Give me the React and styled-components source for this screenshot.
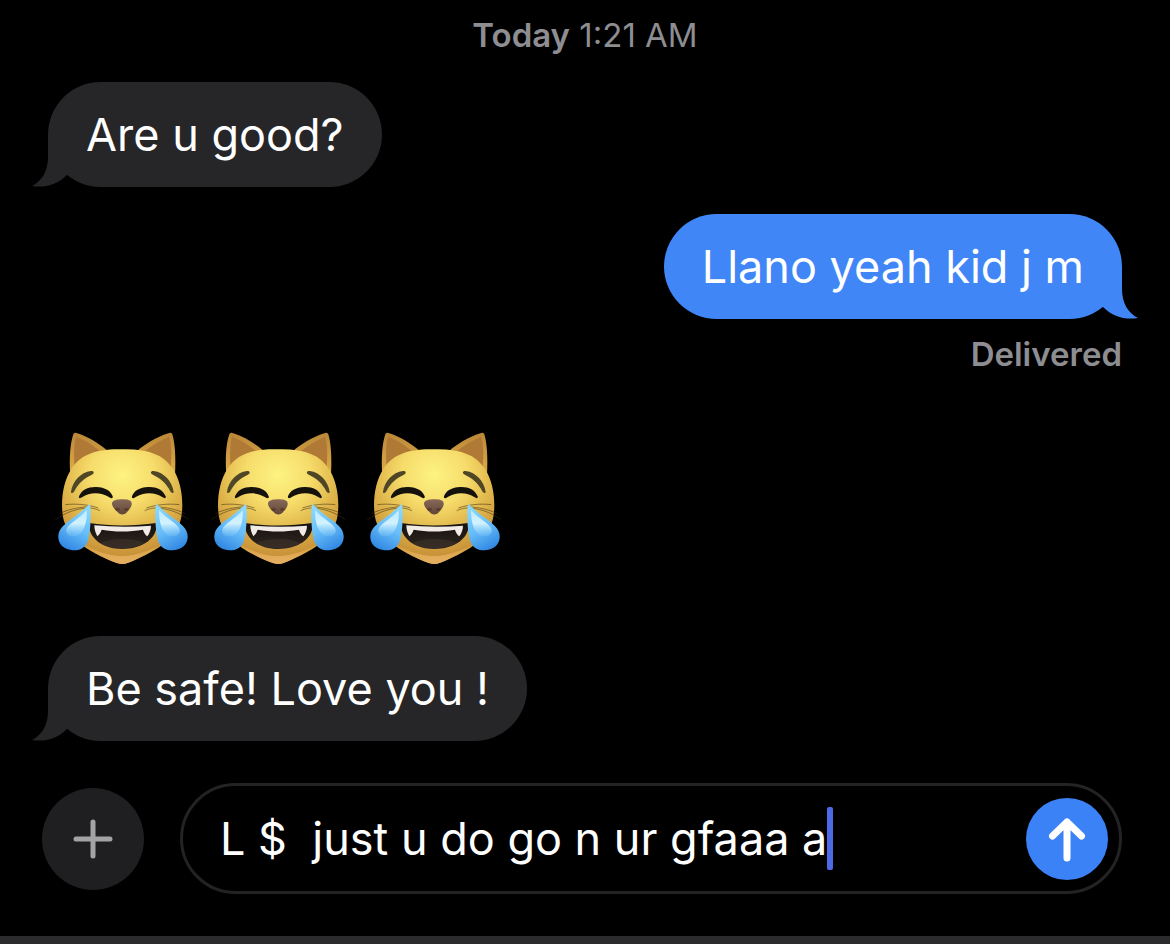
import { useState } from "react";
import styled, { createGlobalStyle } from "styled-components";

const GlobalStyle = createGlobalStyle`
  * {
    box-sizing: border-box;
  }
  body {
    margin: 0;
    background-color: #000;
    color: #fff;
    font-family: Inter, Roboto, sans-serif;
  }
`;
const Screen = styled.div`
  min-height: 100vh;
  display: flex;
  flex-direction: column;
`;
const Thread = styled.main`
  flex: 1;
  display: flex;
  flex-direction: column;
  padding: 15px 48px 42px;
`;
const Timestamp = styled.time`
  text-align: center;
  color: #8d8d92;
  font-size: 33px;
  line-height: 40px;
  margin-bottom: 27px;
  strong {
    font-weight: 600;
  }
`;
const Bubble = styled.div`
  position: relative;
  align-self: ${(props) => (props.$mine ? "flex-end" : "flex-start")};
  background-color: ${(props) => (props.$mine ? "#4086f7" : "#262628")};
  border-radius: 53px;
  padding: 24px 38px;
  font-size: 45px;
  line-height: 57px;
`;
const TailSvg = styled.svg`
  position: absolute;
  bottom: 0;
  ${(props) => (props.$mine ? "right: -16px;" : "left: -16px;")}
  transform: ${(props) => (props.$mine ? "scaleX(-1)" : "none")};
  fill: ${(props) => (props.$mine ? "#4086f7" : "#262628")};
`;
const Sent = styled.div`
  display: flex;
  flex-direction: column;
  margin-top: 27px;
`;
const Status = styled.div`
  align-self: flex-end;
  margin-top: 15px;
  color: #8d8d92;
  font-size: 33px;
  font-weight: 600;
  line-height: 40px;
`;
const EmojiRow = styled.div`
  display: flex;
  margin: 46px -8px 61px;
`;
const Composer = styled.form`
  display: flex;
  align-items: center;
  gap: 36px;
  padding: 0 48px 42px 42px;
`;
const PlusButton = styled.button`
  flex: none;
  display: flex;
  align-items: center;
  justify-content: center;
  width: 102px;
  height: 102px;
  padding: 0;
  border: 0;
  border-radius: 50%;
  background-color: #1f1f21;
`;
const Field = styled.div`
  flex: 1;
  min-width: 0;
  display: flex;
  align-items: center;
  height: 111px;
  padding: 0 11px 0 37px;
  border: 3px solid #232325;
  border-radius: 56px;
`;
const MessageInput = styled.input`
  field-sizing: content;
  min-width: 0;
  padding: 0;
  border: 0;
  outline: none;
  background: transparent;
  color: #fff;
  caret-color: transparent;
  font-family: inherit;
  font-size: 45px;
  line-height: 57px;
`;
const Caret = styled.span`
  flex: none;
  width: 6px;
  height: 63px;
  border-radius: 2px;
  background-color: #4e69e6;
`;
const SendButton = styled.button`
  flex: none;
  display: flex;
  align-items: center;
  justify-content: center;
  width: 82px;
  height: 82px;
  margin-left: auto;
  padding: 0;
  border: 0;
  border-radius: 50%;
  background-color: #3b82f6;
`;
const KeyboardEdge = styled.div`
  height: 8px;
  background-color: #2b2b2d;
`;

function Message({ mine, children }) {
  return (
    <Bubble $mine={mine}>
      <TailSvg $mine={mine} width="36" height="53" viewBox="0 0 36 53" aria-hidden="true">
        <path d="M16 0V23C16 37 10 47 0 52C13 54 25 51 35 41V0Z" />
      </TailSvg>
      {children}
    </Bubble>
  );
}

function Tear({ flip }) {
  return (
    <g transform={flip ? "translate(498 0) scale(-1 1)" : undefined}>
      <path
        d="M149 252C155 264 152 325 146 353C141 381 122 392 99 391C71 390 53 371 55 347C57 325 75 311 99 294C119 280 136 263 149 252Z"
        fill="url(#tear)"
      />
      <path
        d="M141 270C141 300 136 330 117 344C101 354 76 348 79 329C82 312 119 296 141 270Z"
        fill="url(#shine)"
      />
    </g>
  );
}

function HalfFace() {
  return (
    <g>
      <path
        d="M93 216C97 184 122 157 153 153C161 152 164 159 158 163C132 176 116 189 103 214C100 220 93 221 93 216Z"
        fill="#4f4626"
      />
      <path
        d="M117 229C125 209 145 200 169 201C195 202 213 213 218 229C220 236 213 236 208 232C182 216 150 216 126 232C120 236 115 235 117 229Z"
        fill="#15120c"
      />
      <path
        d="M76 254C110 250 145 254 175 264M46 299C80 275 116 264 151 264C162 265 171 268 180 272M58 281C85 268 110 263 145 260"
        fill="none"
        stroke="#3d2c10"
        strokeWidth="2"
        opacity="0.8"
      />
    </g>
  );
}

function JoyCat() {
  return (
    <svg width="156" height="155" viewBox="0 0 468 465" role="img" aria-label="Cat with tears of joy">
      <path d="M91 165C87 113 91 68 100 43C102 37 107 37 112 40C148 52 180 72 204 94L105 190Z" fill="url(#ear)" />
      <path d="M405 165C408 113 405 68 397 43C395 37 390 37 385 40C348 52 315 72 290 94L390 190Z" fill="url(#ear)" />
      <path d="M104 143C101 105 102 72 108 50C137 61 159 75 180 94C147 104 122 122 104 143Z" fill="#b07a36" />
      <path d="M392 143C395 105 394 72 388 50C360 61 337 75 314 94C348 105 374 122 392 143Z" fill="#b07a36" />
      <path
        d="M246 88C322 86 371 103 399 147C421 181 430 230 426 276C421 345 363 386 291 417C271 426 256 432 246 432C235 432 219 425 201 417C130 386 72 345 67 276C63 230 72 181 94 147C122 103 170 86 246 88Z"
        fill="url(#face)"
      />
      <path
        d="M130 374C163 391 204 407 246 408C289 407 330 391 365 374C340 392 294 417 265 428C251 434 239 433 224 427C182 410 147 391 130 374Z"
        fill="url(#chin)"
      />
      <HalfFace />
      <g transform="translate(494 0) scale(-1 1)">
        <HalfFace />
      </g>
      <path
        d="M216 249C219 240 233 238 247 238C262 238 273 240 275 249C277 258 267 271 261 276C257 285 238 286 233 276C225 270 215 258 216 249Z"
        fill="url(#nose)"
      />
      <ellipse cx="233" cy="268" rx="7" ry="5" fill="#4a3228" opacity="0.6" />
      <ellipse cx="259" cy="268" rx="7" ry="5" fill="#4a3228" opacity="0.6" />
      <path
        d="M147 309C211 319 283 319 349 309C355 354 307 387 247 387C188 387 144 354 147 309Z"
        fill="url(#mouth)"
      />
      <path
        d="M163 316C220 321 277 321 333 317C333 329 328 341 322 349C316 345 311 337 309 329C268 336 224 336 185 329C182 338 178 344 172 349C167 340 163 328 163 316Z"
        fill="#f0ebe4"
      />
      <path d="M181 370C207 353 287 353 313 370C280 389 215 391 181 370Z" fill="#3b3029" opacity="0.7" />
      <Tear />
      <Tear flip />
    </svg>
  );
}

function EmojiDefs() {
  return (
    <svg width="0" height="0" aria-hidden="true">
      <defs>
        <radialGradient id="face" cx="0.5" cy="0.22" r="0.78">
          <stop offset="0" stopColor="#fdf383" />
          <stop offset="0.35" stopColor="#f6dc6a" />
          <stop offset="0.65" stopColor="#deb349" />
          <stop offset="1" stopColor="#c08532" />
        </radialGradient>
        <linearGradient id="ear" x1="0" y1="0" x2="0" y2="1">
          <stop offset="0" stopColor="#bb8738" />
          <stop offset="1" stopColor="#e4b64d" />
        </linearGradient>
        <linearGradient id="chin" x1="0" y1="0" x2="0" y2="1">
          <stop offset="0" stopColor="#d7a144" />
          <stop offset="1" stopColor="#e6b063" />
        </linearGradient>
        <linearGradient id="nose" x1="0" y1="0" x2="0" y2="1">
          <stop offset="0" stopColor="#87695a" />
          <stop offset="1" stopColor="#644637" />
        </linearGradient>
        <linearGradient id="mouth" x1="0" y1="0" x2="0" y2="1">
          <stop offset="0" stopColor="#15110f" />
          <stop offset="1" stopColor="#31261f" />
        </linearGradient>
        <linearGradient id="tear" x1="0.7" y1="0" x2="0.3" y2="1">
          <stop offset="0" stopColor="#8bd8fa" />
          <stop offset="0.5" stopColor="#67bdf8" />
          <stop offset="1" stopColor="#2f86e2" />
        </linearGradient>
        <linearGradient id="shine" x1="0.5" y1="0" x2="0.5" y2="1">
          <stop offset="0" stopColor="#bdeafc" />
          <stop offset="0.5" stopColor="#d3f2ff" />
          <stop offset="1" stopColor="#8fd2fb" stopOpacity="0.2" />
        </linearGradient>
      </defs>
    </svg>
  );
}

export default function App() {
  const [draft, setDraft] = useState("L $  just u do go n ur gfaaa a");

  return (
    <Screen>
      <GlobalStyle />
      <Thread>
        <Timestamp>
          <strong>Today</strong> 1:21 AM
        </Timestamp>
        <Message>Are u good?</Message>
        <Sent>
          <Message mine>Llano yeah kid j m</Message>
          <Status>Delivered</Status>
        </Sent>
        <EmojiRow>
          <EmojiDefs />
          <JoyCat />
          <JoyCat />
          <JoyCat />
        </EmojiRow>
        <Message>Be safe! Love you !</Message>
      </Thread>
      <Composer onSubmit={(e) => e.preventDefault()}>
        <PlusButton type="button" aria-label="Add attachment">
          <svg width="40" height="40" viewBox="0 0 40 40" stroke="#a3a3a6" strokeWidth="5" strokeLinecap="round">
            <path d="M3 20H37M20 3V37" />
          </svg>
        </PlusButton>
        <Field>
          <MessageInput aria-label="Message" value={draft} onChange={(e) => setDraft(e.target.value)} />
          <Caret />
          <SendButton type="submit" aria-label="Send">
            <svg width="40" height="48" viewBox="0 0 40 48" fill="none" stroke="#fff" strokeWidth="7" strokeLinecap="round" strokeLinejoin="round">
              <path d="M20 43V7M5.500 21L20 7L34.500 21" />
            </svg>
          </SendButton>
        </Field>
      </Composer>
      <KeyboardEdge />
    </Screen>
  );
}
